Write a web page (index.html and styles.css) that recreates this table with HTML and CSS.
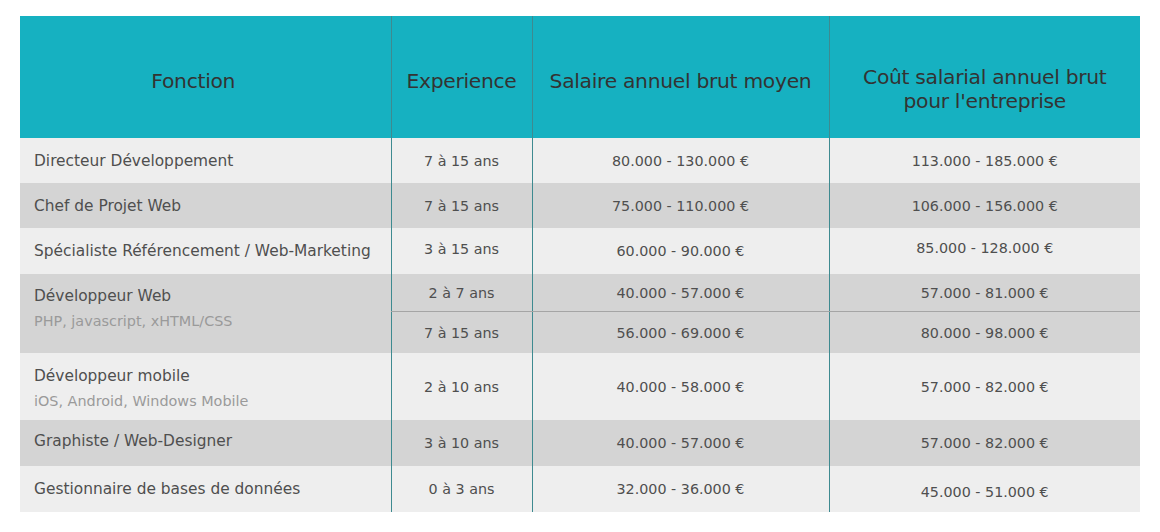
FILE: index.html
```html
<!DOCTYPE html>
<html lang="fr">
<head>
<meta charset="utf-8">
<title>Salaires</title>
<link rel="stylesheet" href="styles.css">
</head>
<body>
<table class="salary">
  <colgroup>
    <col class="c1"><col class="c2"><col class="c3"><col class="c4">
  </colgroup>
  <thead>
    <tr>
      <th class="h-fonction">Fonction</th>
      <th>Experience</th>
      <th>Salaire annuel brut moyen</th>
      <th class="two">Coût salarial annuel brut<br>pour l'entreprise</th>
    </tr>
  </thead>
  <tbody>
    <tr class="light r45">
      <td class="fn">Directeur Développement</td>
      <td>7 à 15 ans</td>
      <td>80.000 - 130.000 €</td>
      <td>113.000 - 185.000 €</td>
    </tr>
    <tr class="dark r45">
      <td class="fn">Chef de Projet Web</td>
      <td>7 à 15 ans</td>
      <td>75.000 - 110.000 €</td>
      <td>106.000 - 156.000 €</td>
    </tr>
    <tr class="light r46">
      <td class="fn">Spécialiste Référencement / Web-Marketing</td>
      <td class="up">3 à 15 ans</td>
      <td>60.000 - 90.000 €</td>
      <td class="up3">85.000 - 128.000 €</td>
    </tr>
    <tr class="dark r38">
      <td class="fn raised" rowspan="2">Développeur Web<span class="sub">PHP, javascript, xHTML/CSS</span></td>
      <td class="split">2 à 7 ans</td>
      <td class="split">40.000 - 57.000 €</td>
      <td class="split">57.000 - 81.000 €</td>
    </tr>
    <tr class="dark r41">
      <td>7 à 15 ans</td>
      <td>56.000 - 69.000 €</td>
      <td>80.000 - 98.000 €</td>
    </tr>
    <tr class="light r67">
      <td class="fn down">Développeur mobile<span class="sub">iOS, Android, Windows Mobile</span></td>
      <td>2 à 10 ans</td>
      <td>40.000 - 58.000 €</td>
      <td>57.000 - 82.000 €</td>
    </tr>
    <tr class="dark r46">
      <td class="fn up">Graphiste / Web-Designer</td>
      <td>3 à 10 ans</td>
      <td>40.000 - 57.000 €</td>
      <td>57.000 - 82.000 €</td>
    </tr>
    <tr class="light r46">
      <td class="fn">Gestionnaire de bases de données</td>
      <td>0 à 3 ans</td>
      <td>32.000 - 36.000 €</td>
      <td class="down3">45.000 - 51.000 €</td>
    </tr>
  </tbody>
</table>
</body>
</html>
```

FILE: styles.css
```css
html, body {
  margin: 0;
  padding: 0;
  background: #ffffff;
}

body {
  padding: 16px 20px 0 20px;
  font-family: "DejaVu Sans", "Liberation Sans", sans-serif;
}

.salary {
  width: 1120px;
  border-collapse: collapse;
  table-layout: fixed;
  border-spacing: 0;
}

.c1 { width: 371px; }
.c2 { width: 141px; }
.c3 { width: 297px; }
.c4 { width: 311px; }

.salary th {
  background: #16b1c1;
  color: #333333;
  font-weight: normal;
  font-size: 20.3px;
  line-height: 24px;
  height: 114px;
  padding: 8px 0 0 0;
  text-align: center;
  vertical-align: middle;
  border-left: 1px solid #3e8a90;
  letter-spacing: -0.3px;
}

.salary th.two {
  height: 98px;
  padding-top: 24px;
}

.salary th:first-child {
  border-left: none;
}

.salary th.h-fonction {
  padding-right: 24px;
}

.salary td {
  color: #4f4f4f;
  font-size: 14.3px;
  line-height: 18px;
  padding: 0;
  text-align: center;
  vertical-align: middle;
  border-left: 1px solid #3e8a90;
}

.salary td.fn {
  text-align: left;
  font-size: 15.4px;
  padding-left: 14px;
  border-left: none;
}

.salary td.fn.raised {
  padding-bottom: 10px;
}

.salary td.up,
.salary td.up3,
.salary td.down,
.salary td.down3 {
  box-sizing: border-box;
}

.salary td.up { padding-bottom: 4px; }
.salary td.up3 { padding-bottom: 6px; }
.salary td.down { padding-top: 4px; }
.salary td.down3 { padding-top: 6px; }

.salary td.split {
  border-bottom: 1px solid #a5a5a5;
}

.sub {
  display: block;
  color: #9a9a9a;
  font-size: 14.4px;
  margin-top: 7px;
}

.light td { background: #eeeeee; }
.dark td { background: #d4d4d4; }

.r45 td { height: 45px; }
.r46 td { height: 46px; }
.r38 td { height: 37px; }
.r41 td { height: 41px; }
.r67 td { height: 67px; }
```
